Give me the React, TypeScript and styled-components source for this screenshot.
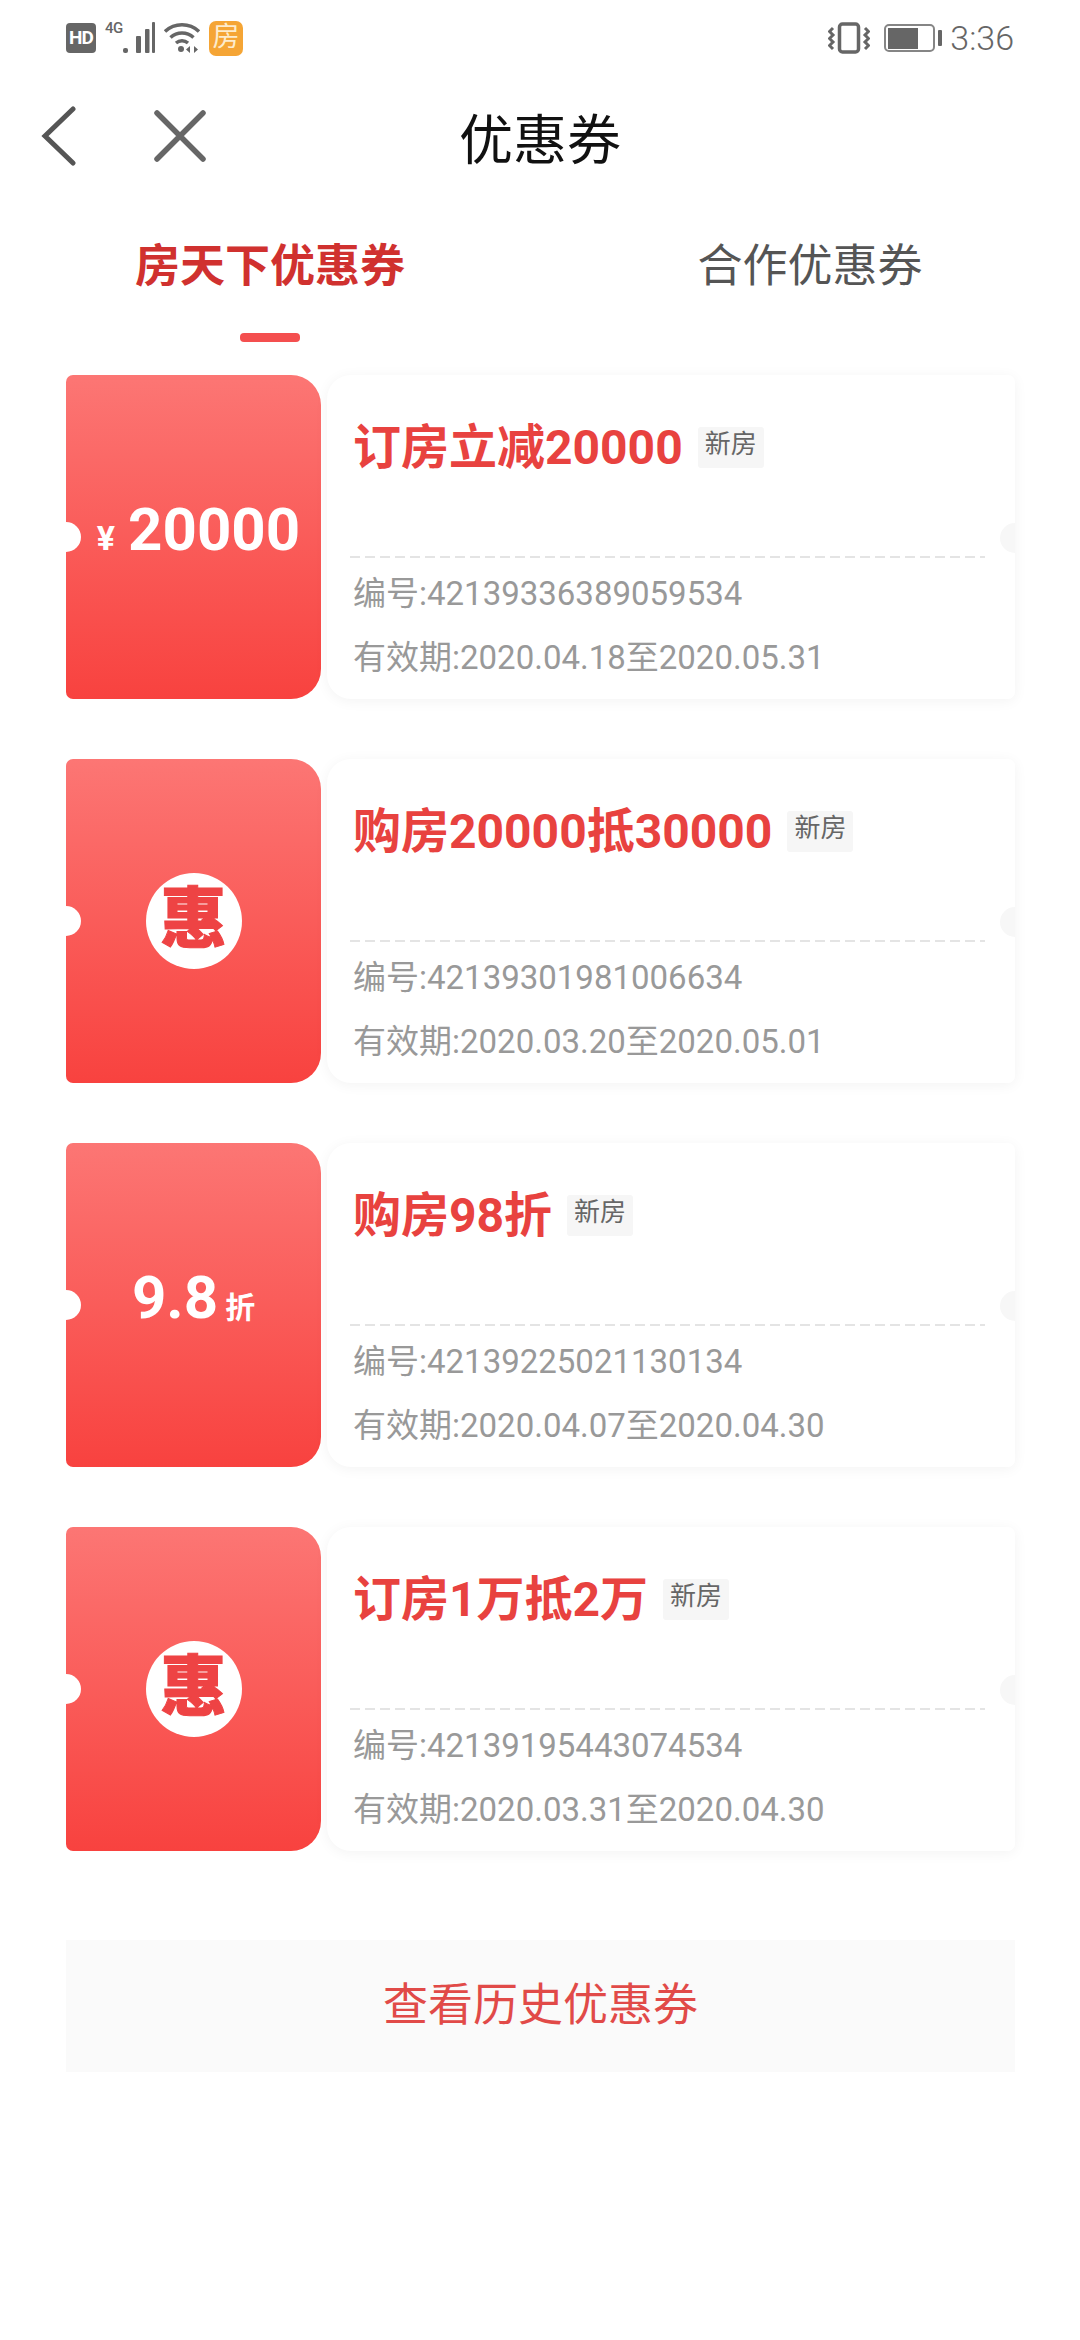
import styled, { createGlobalStyle } from "styled-components";

type Coupon = {
  title: string;
  code: string;
  period: string;
  kind: "amount" | "discount" | "badge";
  value?: string;
};

const coupons: Coupon[] = [
  {
    title: "订房立减20000",
    code: "42139336389059534",
    period: "2020.04.18至2020.05.31",
    kind: "amount",
    value: "20000",
  },
  {
    title: "购房20000抵30000",
    code: "42139301981006634",
    period: "2020.03.20至2020.05.01",
    kind: "badge",
  },
  {
    title: "购房98折",
    code: "42139225021130134",
    period: "2020.04.07至2020.04.30",
    kind: "discount",
    value: "9.8",
  },
  {
    title: "订房1万抵2万",
    code: "42139195443074534",
    period: "2020.03.31至2020.04.30",
    kind: "badge",
  },
];

const App = () => {
  return (
    <Page>
      <GlobalStyle />
      <StatusBar>
        <StatusGroup>
          <HdMark>HD</HdMark>
          <Network>
            <NetworkLabel>4G</NetworkLabel>
            <svg width="34" height="34" viewBox="0 0 34 34" fill="#666">
              <rect x="2" y="27" width="5" height="5" rx="2" />
              <rect x="15" y="15" width="5" height="17" rx="1" />
              <rect x="24" y="8" width="4.500" height="24" rx="1" />
              <rect x="31" y="1" width="3" height="31" rx="1" />
            </svg>
          </Network>
          <svg width="37" height="32" viewBox="0 0 37 32" fill="none" stroke="#666" strokeWidth="3.500">
            <path d="M1 9.500C10.500 0.500 25.500 0.500 35 9.500" />
            <path d="M6.500 15.500C13 9.500 23 9.500 29.500 15.500" />
            <path d="M12 21C15.500 18 20.500 18 24 21" />
            <circle cx="17" cy="27" r="3" fill="#666" stroke="none" />
            <path d="M26 24v7l-4-3.500zM30 24v7l4-3.500z" fill="#666" stroke="none" />
          </svg>
          <AppMark>房</AppMark>
        </StatusGroup>
        <StatusGroup>
          <svg width="42" height="32" viewBox="0 0 42 32" fill="none" stroke="#666">
            <rect x="11.500" y="2" width="19" height="28" rx="3" strokeWidth="3.500" />
            <path d="M5 6L1.500 9.500L5 13L1.500 16.500L5 20L1.500 23.500L5 27" strokeWidth="3" />
            <path d="M37 6L40.500 9.500L37 13L40.500 16.500L37 20L40.500 23.500L37 27" strokeWidth="3" />
          </svg>
          <Battery>
            <BatteryLevel />
          </Battery>
          <Clock>3:36</Clock>
        </StatusGroup>
      </StatusBar>

      <NavBar>
        <NavActions>
          <svg width="36" height="62" viewBox="0 0 36 62" fill="none" stroke="#555" strokeWidth="5" strokeLinecap="round">
            <path d="M33 4L5 31L33 58" />
          </svg>
          <svg width="52" height="52" viewBox="0 0 52 52" fill="none" stroke="#666" strokeWidth="5.500" strokeLinecap="round">
            <path d="M3 3L49 49M49 3L3 49" />
          </svg>
        </NavActions>
        <NavTitle>优惠券</NavTitle>
      </NavBar>

      <Tabs>
        <Tab>
          <TabLabel $active>房天下优惠券</TabLabel>
          <TabMarker />
        </Tab>
        <Tab>
          <TabLabel>合作优惠券</TabLabel>
        </Tab>
      </Tabs>

      <CouponList>
        {coupons.map((coupon) => (
          <CouponCard key={coupon.code}>
            <Stub>
              {coupon.kind === "amount" && (
                <AmountRow $gap={13} $shift={10}>
                  <YenUnit>¥</YenUnit>
                  <BigValue>{coupon.value}</BigValue>
                </AmountRow>
              )}
              {coupon.kind === "discount" && (
                <AmountRow $gap={7} $shift={0}>
                  <BigValue>{coupon.value}</BigValue>
                  <SmallUnit>折</SmallUnit>
                </AmountRow>
              )}
              {coupon.kind === "badge" && <HuiBadge>惠</HuiBadge>}
            </Stub>
            <Details>
              <TitleRow>
                <CouponTitle>{coupon.title}</CouponTitle>
                <Tag>新房</Tag>
              </TitleRow>
              <Dashes />
              <InfoLine>编号:{coupon.code}</InfoLine>
              <InfoLine $second>有效期:{coupon.period}</InfoLine>
            </Details>
          </CouponCard>
        ))}
      </CouponList>

      <HistoryButton>查看历史优惠券</HistoryButton>
    </Page>
  );
};

export default App;

const GlobalStyle = createGlobalStyle`
  html, body {
    margin: 0;
    padding: 0;
    background: #fff;
  }

  * {
    box-sizing: border-box;
  }
`;

const Page = styled.div`
  width: 1080px;
  height: 2340px;
  overflow: hidden;
  background: #fff;
  font-family: Roboto, "Noto Sans CJK SC", sans-serif;
`;

const StatusBar = styled.div`
  height: 76px;
  padding: 21px 66px 0 66px;
  display: flex;
  justify-content: space-between;
  align-items: flex-start;
`;

const StatusGroup = styled.div`
  display: flex;
  align-items: center;
  height: 34px;
  gap: 9px;
`;

const HdMark = styled.div`
  width: 30px;
  height: 30px;
  border-radius: 4px;
  background: #666;
  color: #fff;
  font-size: 19px;
  font-weight: 700;
  line-height: 30px;
  text-align: center;
  letter-spacing: -1px;
`;

const Network = styled.div`
  display: flex;
  align-items: flex-start;
  width: 50px;
`;

const NetworkLabel = styled.span`
  width: 16px;
  font-size: 15px;
  line-height: 15px;
  font-weight: 500;
  color: #666;
  letter-spacing: -0.5px;
`;

const AppMark = styled.div`
  width: 34px;
  height: 35px;
  margin-left: -1px;
  border-radius: 7px;
  background: #f5a535;
  color: #fdeccd;
  font-size: 27px;
  line-height: 33px;
  text-align: center;
`;

const Battery = styled.div`
  position: relative;
  width: 51px;
  height: 28px;
  margin-left: 5px;
  padding: 1.5px;
  border: 2px solid #858585;
  border-radius: 5px;

  &::after {
    content: "";
    position: absolute;
    right: -9px;
    top: 4px;
    width: 4px;
    height: 16px;
    border-radius: 1px;
    background: #666;
  }
`;

const BatteryLevel = styled.div`
  width: 30px;
  height: 100%;
  background: #666;
`;

const Clock = styled.span`
  margin-left: 6px;
  font-size: 34px;
  font-weight: 300;
  color: #666;
  line-height: 34px;
`;

const NavBar = styled.div`
  height: 120px;
  padding: 0 40px;
  display: grid;
  grid-template-columns: 1fr auto 1fr;
  align-items: center;
`;

const NavActions = styled.div`
  display: flex;
  align-items: center;
  gap: 78px;
`;

const NavTitle = styled.h1`
  margin: 0;
  font-size: 54px;
  font-weight: 400;
  color: #111;
`;

const Tabs = styled.div`
  display: flex;
  height: 146px;
`;

const Tab = styled.div`
  flex: 1;
  padding-top: 41px;
  display: flex;
  flex-direction: column;
  align-items: center;
`;

const TabLabel = styled.span<{ $active?: boolean }>`
  font-size: 45px;
  line-height: 60px;
  font-weight: ${(p) => (p.$active ? 700 : 400)};
  color: ${(p) => (p.$active ? "#d0312f" : "#555")};
`;

const TabMarker = styled.div`
  width: 60px;
  height: 9px;
  margin-top: 36px;
  border-radius: 4px;
  background: #f44f4f;
`;

const CouponList = styled.div`
  margin-top: 33px;
  padding: 0 65px 0 66px;
  display: flex;
  flex-direction: column;
  gap: 60px;
`;

const CouponCard = styled.div`
  display: flex;
  gap: 6px;
  height: 324px;
`;

const Stub = styled.div`
  position: relative;
  width: 255px;
  overflow: hidden;
  border-radius: 7px 30px 30px 7px;
  background: linear-gradient(180deg, #fc7674 0%, #f8423f 100%);
  display: flex;
  align-items: center;
  justify-content: center;

  &::before {
    content: "";
    position: absolute;
    left: -15px;
    top: 147px;
    width: 30px;
    height: 30px;
    border-radius: 50%;
    background: #fff;
  }
`;

const AmountRow = styled.div<{ $gap: number; $shift: number }>`
  display: flex;
  align-items: baseline;
  gap: ${(p) => p.$gap}px;
  margin-top: -15px;
  margin-left: ${(p) => p.$shift}px;
  color: #fff;
`;

const BigValue = styled.span`
  font-size: 60px;
  line-height: 60px;
  font-weight: 700;
`;

const YenUnit = styled.span`
  font-size: 34px;
  font-weight: 700;
`;

const SmallUnit = styled.span`
  font-size: 30px;
  font-weight: 700;
`;

const HuiBadge = styled.div`
  width: 96px;
  height: 96px;
  border-radius: 50%;
  background: #fff;
  color: #ee4344;
  font-size: 66px;
  line-height: 94px;
  font-weight: 900;
  text-align: center;
  -webkit-text-stroke: 1px #ee4344;
`;

const Details = styled.div`
  position: relative;
  flex: 1;
  padding: 43px 30px 0 23px;
  border-radius: 24px 7px 7px 24px;
  background: #fff;
  box-shadow: 0 2px 14px rgba(0, 0, 0, 0.05);

  &::after {
    content: "";
    position: absolute;
    right: 0;
    top: 148px;
    width: 15px;
    height: 30px;
    border-radius: 15px 0 0 15px;
    background: #f7f7f7;
  }
`;

const TitleRow = styled.div`
  height: 60px;
  padding-left: 3px;
  display: flex;
  align-items: center;
  gap: 15px;
`;

const CouponTitle = styled.span`
  font-size: 48px;
  line-height: 60px;
  font-weight: 700;
  color: #e8423f;
`;

const Tag = styled.span`
  height: 41px;
  margin-top: -2px;
  padding: 0 7px;
  border-radius: 3px;
  background: #f6f6f6;
  color: #666;
  font-size: 26px;
  line-height: 34px;
`;

const Dashes = styled.div`
  height: 2px;
  margin-top: 78px;
  background: repeating-linear-gradient(90deg, #e4e4e4 0 10px, transparent 10px 15px);
`;

const InfoLine = styled.div<{ $second?: boolean }>`
  margin-top: ${(p) => (p.$second ? 20 : 14)}px;
  padding-left: 3px;
  font-size: 33px;
  line-height: 44px;
  color: #999;
`;

const HistoryButton = styled.div`
  width: 949px;
  height: 132px;
  margin: 89px 0 0 66px;
  background: #fafafa;
  color: #e14a48;
  font-size: 45px;
  line-height: 132px;
  text-align: center;
`;
